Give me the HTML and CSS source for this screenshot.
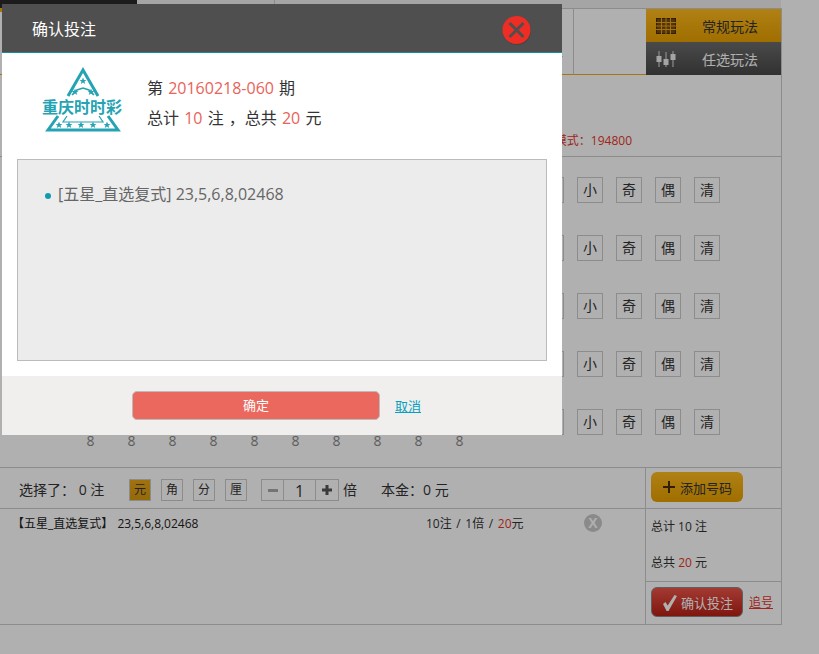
FILE: index.html
```html
<!DOCTYPE html>
<html lang="zh-CN">

<head>
    <meta charset="UTF-8">
    <meta name="viewport" content="width=device-width, initial-scale=1.0">
    <title>确认投注</title>
    <link rel="stylesheet" href="styles.css">
</head>

<body>
    <div class="page">
        <!-- Top nav strip -->
        <div class="nav">
            <div class="nav-tab nav-tab-active"></div>
            <div class="nav-tab"></div>
        </div>

        <div class="board">
            <!-- Play type tabs -->
            <div class="play-row">
                <div class="play-list">
                    <span class="play-link">五星</span>
                </div>
                <div class="play-empty"></div>
                <div class="play-side">
                    <div class="side-tab side-tab-gold">
                        <svg class="side-icon" width="20" height="16" viewBox="0 0 20 16">
                            <rect x="0.5" y="0.5" width="19" height="15" fill="#7a4a0a" stroke="#4a2c05"/>
                            <path d="M0 4.5h20M0 8h20M0 11.5h20M5.5 0v16M10 0v16M14.5 0v16" stroke="#e8a518" stroke-width="1"/>
                        </svg>
                        <span>常规玩法</span>
                    </div>
                    <div class="side-tab side-tab-dark">
                        <svg class="side-icon" width="20" height="16" viewBox="0 0 20 16">
                            <path d="M3 0v16M10 1v16M17 0v16" stroke="#bbb" stroke-width="1.4"/>
                            <rect x="0.5" y="5" width="5" height="6" fill="#eee"/>
                            <rect x="7.5" y="8" width="5" height="6" fill="#eee"/>
                            <rect x="14.5" y="3" width="5" height="6" fill="#eee"/>
                        </svg>
                        <span>任选玩法</span>
                    </div>
                </div>
            </div>

            <!-- Rule info -->
            <div class="rule-info">
                <span class="rule-text">模式：194800</span>
            </div>

            <!-- Number rows -->
            <div class="num-rows">
                <div class="num-row">
                    <span class="pick-btn">大</span><span class="pick-btn">小</span><span class="pick-btn">奇</span><span class="pick-btn">偶</span><span class="pick-btn">清</span>
                </div>
                <div class="num-row">
                    <span class="pick-btn">大</span><span class="pick-btn">小</span><span class="pick-btn">奇</span><span class="pick-btn">偶</span><span class="pick-btn">清</span>
                </div>
                <div class="num-row">
                    <span class="pick-btn">大</span><span class="pick-btn">小</span><span class="pick-btn">奇</span><span class="pick-btn">偶</span><span class="pick-btn">清</span>
                </div>
                <div class="num-row">
                    <span class="pick-btn">大</span><span class="pick-btn">小</span><span class="pick-btn">奇</span><span class="pick-btn">偶</span><span class="pick-btn">清</span>
                </div>
                <div class="num-row">
                    <span class="pick-btn">大</span><span class="pick-btn">小</span><span class="pick-btn">奇</span><span class="pick-btn">偶</span><span class="pick-btn">清</span>
                </div>
                <div class="hints">
                    <span>8</span><span>8</span><span>8</span><span>8</span><span>8</span><span>8</span><span>8</span><span>8</span><span>8</span><span>8</span>
                </div>
            </div>

            <!-- Selection and order -->
            <div class="bet-grid">
                <div class="select-row">
                    <span class="picked">选择了： 0 注</span>
                    <div class="units">
                        <span class="unit unit-on">元</span>
                        <span class="unit">角</span>
                        <span class="unit">分</span>
                        <span class="unit">厘</span>
                    </div>
                    <div class="stepper">
                        <span class="step-btn">
                            <svg width="10" height="3" viewBox="0 0 10 3"><rect width="10" height="3" fill="#a8a8a8"/></svg>
                        </span>
                        <span class="step-value">1</span>
                        <span class="step-btn step-btn-last">
                            <svg width="10" height="10" viewBox="0 0 10 10"><path d="M0 5h10M5 0v10" stroke="#555" stroke-width="3"/></svg>
                        </span>
                    </div>
                    <span class="times">倍</span>
                    <span class="capital">本金：0 元</span>
                </div>
                <div class="add-cell">
                    <a class="add-btn">
                        <svg width="12" height="12" viewBox="0 0 12 12"><path d="M0 6h12M6 0v12" stroke="#4a2a05" stroke-width="2"/></svg>
                        添加号码
                    </a>
                </div>
                <div class="order-list">
                    <div class="order-item">
                        <span class="order-name">【五星_直选复式】 <span class="order-nums">23,5,6,8,02468</span></span>
                        <span class="order-count">10注 / 1倍 / <em class="red">20</em>元</span>
                        <span class="order-del">X</span>
                    </div>
                </div>
                <div class="summary">
                    <div class="totals">
                        <div>总计 10 注</div>
                        <div>总共 <em class="red">20</em> 元</div>
                    </div>
                    <div class="submit-row">
                        <a class="submit-btn">
                            <svg width="15" height="17" viewBox="0 0 15 17"><path d="M1 10l2.5-2 2.2 3.4L12.5 1 15 2 6.5 17H4.6z" fill="#fff"/></svg>
                            确认投注
                        </a>
                        <a class="chase-link">追号</a>
                    </div>
                </div>
            </div>
        </div>
    </div>

    <div class="overlay"></div>

    <!-- Confirm dialog -->
    <div class="dialog">
        <div class="dialog-head">
            <span class="dialog-title">确认投注</span>
            <svg class="dialog-close" width="30" height="30" viewBox="0 0 30 30">
                <circle cx="15" cy="16" r="14" fill="#3a3a3a" opacity="0.5"/>
                <circle cx="14.5" cy="15" r="14" fill="#ee2d24"/>
                <path d="M7.5 8l14 14M21.5 8l-14 14" stroke="#4f4f4f" stroke-width="3"/>
            </svg>
        </div>
        <div class="dialog-body">
            <div class="dialog-info">
                <svg class="logo" width="84" height="66" viewBox="0 0 84 66">
                    <defs>
                        <polygon id="star" points="0,-3.4 1,-1 3.4,-1 1.5,0.5 2.2,3 0,1.5 -2.2,3 -1.5,0.5 -3.4,-1 -1,-1"/>
                    </defs>
                    <g fill="none" stroke="#25a3b3">
                        <path d="M29 30L44 4l15 26" stroke-width="3"/>
                        <path d="M33 29l5-5 6-2 6 2 5 5" stroke-width="1.5"/>
                        <path d="M19 50L9 64h70L69 50" stroke-width="3"/>
                        <path d="M28 50l-4 6h40l-4-6" stroke-width="1.2"/>
                    </g>
                    <g fill="#25a3b3">
                        <use href="#star" x="44" y="15"/>
                        <use href="#star" x="36" y="26"/>
                        <use href="#star" x="52" y="26"/>
                        <use href="#star" x="20" y="59"/>
                        <use href="#star" x="30" y="59"/>
                        <use href="#star" x="42" y="59"/>
                        <use href="#star" x="54" y="59"/>
                        <use href="#star" x="68" y="59"/>
                    </g>
                    <text class="logo-text" x="3" y="47" textLength="80" lengthAdjust="spacingAndGlyphs">重庆时时彩</text>
                </svg>
                <div class="dialog-summary">
                    <div>第 <em class="hot">20160218-060</em> 期</div>
                    <div>总计 <em class="hot">10</em> 注 ，总共 <em class="hot">20</em> 元</div>
                </div>
            </div>
            <div class="dialog-box">
                <ul class="bet-list">
                    <li>[五星_直选复式] 23,5,6,8,02468</li>
                </ul>
            </div>
        </div>
        <div class="dialog-foot">
            <a class="ok-btn">确定</a>
            <a class="cancel-link">取消</a>
        </div>
    </div>
</body>

</html>
```

FILE: styles.css
```css
body {
    margin: 0;
    background-color: #fff;
    font-family: "Open Sans", "Noto Sans CJK SC", sans-serif;
    font-size: 14px;
    color: #333;
}

em {
    font-style: normal;
}

.page {
    width: 782px;
}

/* Top nav strip */
.nav {
    display: flex;
    height: 8px;
    width: 781px;
    background-color: #f0f0f0;
}

.nav-tab {
    width: 137px;
    border-right: 1px solid #cbcbcb;
}

.nav-tab-active {
    position: relative;
    z-index: 1;
    border-right: none;
    background-color: #292929;
    box-shadow: 0 4px 0 #f0a81e;
}

.board {
    border: 1px solid #cbcbcb;
    border-width: 1px 1px 1px 0;
}

/* Play type tabs */
.play-row {
    display: flex;
    height: 66px;
}

.play-list {
    width: 574px;
    height: 66px;
    box-sizing: border-box;
    padding: 30px 10px 0 0;
    text-align: right;
    border-right: 1px solid #cbcbcb;
    border-bottom: 1px solid #f0a81e;
}

.play-link {
    color: #2a6fc0;
}

.play-empty {
    width: 72px;
    height: 65px;
    border-bottom: 1px solid #f0a81e;
}

.play-side {
    width: 135px;
}

.side-tab {
    display: flex;
    align-items: center;
    height: 33px;
    padding-left: 10px;
    font-size: 14px;
}

.side-icon {
    margin-right: 26px;
}

.side-tab-gold {
    background: linear-gradient(#ffbb1f, #e8a000);
    color: #333;
}

.side-tab-dark {
    background: linear-gradient(#6c6c6c, #474747);
    color: #fff;
}

/* Rule info */
.rule-info {
    display: flex;
    justify-content: flex-end;
    align-items: flex-end;
    height: 82px;
    box-sizing: border-box;
    padding: 0 149px 7px 0;
    border-bottom: 1px solid #cbcbcb;
    font-size: 12px;
    color: #e8352a;
}

/* Number rows */
.num-rows {
    height: 310px;
    box-sizing: border-box;
    padding-top: 20px;
}

.num-row {
    display: flex;
    justify-content: flex-end;
    gap: 13px;
    height: 26px;
    margin-bottom: 32px;
    padding-right: 61px;
}

.pick-btn {
    width: 26px;
    height: 26px;
    box-sizing: border-box;
    border: 1px solid #cbcbcb;
    text-align: center;
    line-height: 24px;
}

.hints {
    display: flex;
    margin-top: -34px;
    padding-left: 70px;
    color: #888;
    line-height: 16px;
}

.hints span {
    width: 41px;
    text-align: center;
}

/* Selection and order */
.bet-grid {
    display: grid;
    grid-template-columns: 645px 136px;
    grid-template-rows: 41px 115px;
    border-top: 1px solid #cbcbcb;
}

.select-row {
    display: flex;
    align-items: flex-start;
    padding: 11px 0 0 19px;
    border-bottom: 1px solid #cbcbcb;
    line-height: 22px;
}

.picked {
    width: 110px;
}

.units {
    display: flex;
    gap: 10px;
}

.unit {
    width: 22px;
    height: 22px;
    box-sizing: border-box;
    border: 1px solid #cbcbcb;
    font-size: 12px;
    line-height: 20px;
    text-align: center;
}

.unit-on {
    background: linear-gradient(#e8a518, #d89a10);
}

.stepper {
    display: flex;
    margin-left: 14px;
    height: 22px;
    box-sizing: border-box;
    border: 1px solid #cbcbcb;
}

.step-btn {
    display: flex;
    align-items: center;
    justify-content: center;
    width: 21px;
    border-right: 1px solid #cbcbcb;
}

.step-btn-last {
    border-right: none;
    width: 22px;
}

.step-value {
    width: 31px;
    border-right: 1px solid #cbcbcb;
    font-size: 16px;
    text-align: center;
    line-height: 22px;
}

.times {
    margin-left: 4px;
}

.capital {
    margin-left: 24px;
}

.add-cell {
    padding: 4px 0 0 5px;
    border-left: 1px solid #cbcbcb;
    border-bottom: 1px solid #cbcbcb;
}

.add-btn {
    display: flex;
    align-items: center;
    gap: 5px;
    width: 92px;
    height: 30px;
    box-sizing: border-box;
    padding-left: 12px;
    border-radius: 6px;
    background: linear-gradient(#ffbb1f, #e8a000);
    font-size: 13px;
}

.order-list {
    padding-left: 12px;
    font-size: 12px;
}

.order-item {
    display: grid;
    grid-template-columns: 414px 158px 1fr;
    align-items: center;
    height: 28px;
}

.order-name {
    color: #222;
}

.order-nums {
    margin-left: 1px;
}

.order-count {
    word-spacing: 1.5px;
}

.red {
    color: #e8352a;
}

.order-del {
    width: 18px;
    height: 18px;
    border-radius: 50%;
    background-color: #c8c8c8;
    color: #fff;
    font-family: "Liberation Sans", sans-serif;
    font-size: 14px;
    font-weight: 700;
    line-height: 18px;
    text-align: center;
}

.summary {
    border-left: 1px solid #cbcbcb;
}

.totals {
    height: 73px;
    box-sizing: border-box;
    padding-left: 5px;
    border-bottom: 1px solid #cbcbcb;
    font-size: 12px;
    line-height: 36px;
}

.submit-row {
    display: flex;
    align-items: center;
    gap: 6px;
    padding: 5px 0 0 5px;
}

.submit-btn {
    display: flex;
    align-items: center;
    gap: 4px;
    width: 92px;
    height: 30px;
    box-sizing: border-box;
    padding-left: 10px;
    border: 1px solid #8a8a8a;
    border-radius: 6px;
    background: linear-gradient(#ec554a, #b92116);
    color: #fff;
    font-size: 13px;
}

.chase-link {
    color: #e8352a;
    font-size: 12px;
    text-decoration: underline;
}

/* Dialog */
.overlay {
    position: fixed;
    top: 0;
    left: 0;
    right: 0;
    bottom: 0;
    z-index: 10;
    background-color: rgba(0, 0, 0, 0.31);
}

.dialog {
    position: absolute;
    top: 4px;
    left: 2px;
    z-index: 11;
    width: 560px;
    background-color: #fff;
}

.dialog-head {
    display: flex;
    align-items: center;
    justify-content: space-between;
    height: 48px;
    padding: 0 30px;
    background-color: #4f4f4f;
    border-bottom: 1px solid #0f8f99;
}

.dialog-title {
    color: #fff;
    font-size: 16px;
}

.dialog-close {
    margin: 4px 0 0 0;
}

.dialog-info {
    display: flex;
    align-items: flex-start;
    height: 106px;
    box-sizing: border-box;
    padding: 13px 0 0 37px;
}

.logo {
    margin-right: 24px;
}

.logo-text {
    fill: #25a3b3;
    font-size: 16px;
    font-weight: 700;
}

.dialog-summary {
    margin-top: 7px;
    font-size: 16px;
    line-height: 30px;
    word-spacing: 1px;
    color: #333;
}

.hot {
    color: #e8635a;
}

.dialog-box {
    height: 202px;
    box-sizing: border-box;
    margin: 0 15px 15px;
    padding: 19px 0 0 27px;
    border: 1px solid #bbb;
    background-color: #ececec;
}

.bet-list {
    margin: 0;
    padding: 0;
    list-style: none;
    font-size: 16px;
    line-height: 30px;
    color: #666;
}

.bet-list li::before {
    content: "";
    display: inline-block;
    width: 6px;
    height: 6px;
    margin-right: 7px;
    border-radius: 50%;
    background-color: #0f9bb0;
    vertical-align: middle;
}

.dialog-foot {
    display: flex;
    align-items: center;
    height: 59px;
    padding-left: 130px;
    background-color: #f0efed;
}

.ok-btn {
    width: 248px;
    height: 29px;
    box-sizing: border-box;
    border: 1px solid #bbb;
    border-radius: 5px;
    background-color: #ea685e;
    color: #fff;
    font-size: 13px;
    line-height: 27px;
    text-align: center;
}

.cancel-link {
    margin-left: 15px;
    color: #0a9fbf;
    font-size: 13px;
    text-decoration: underline;
}
```
